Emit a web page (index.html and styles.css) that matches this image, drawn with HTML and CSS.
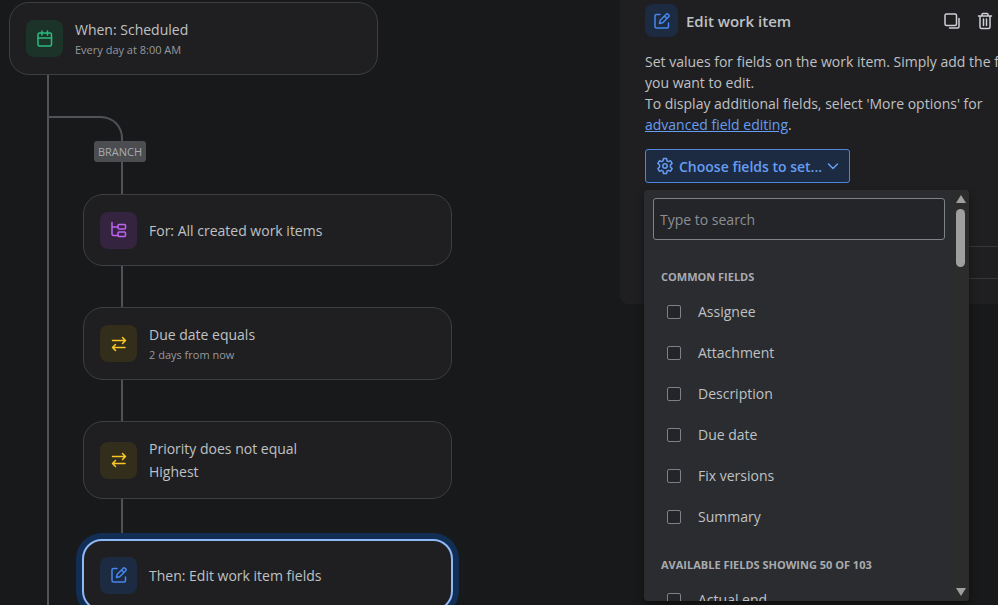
FILE: index.html
```
<!DOCTYPE html>
<html lang="en">
<head>
  <meta charset="utf-8">
  <title>Automation rule</title>
  <link rel="stylesheet" href="styles.css">
</head>
<body>
  <div class="layout">

    <!-- Rule flow -->
    <main class="flow">
      <div class="card">
        <span class="icon green">
          <svg width="18" height="18" viewBox="0 0 18 18"><rect x="2" y="3" width="13.500" height="13" rx="1.5"/><path d="M2 8h13.500M6 1v4M11.500 1v4"/></svg>
        </span>
        <div class="card-text">
          <div class="card-title">When: Scheduled</div>
          <div class="card-sub">Every day at 8:00 AM</div>
        </div>
      </div>

      <div class="branch">
        <div class="branch-line"></div>
        <div class="branch-label">BRANCH</div>
        <div class="connector short"></div>

        <div class="card">
          <span class="icon purple">
            <svg width="18" height="18" viewBox="0 0 18 18"><path d="M2 1.500v11.500q0 1.500 1.500 1.500H8M2 6h6"/><rect x="8" y="3.500" width="7.500" height="4.500" rx="1"/><rect x="8" y="11" width="7.500" height="4.500" rx="1"/></svg>
          </span>
          <div class="card-text">
            <div class="card-title">For: All created work items</div>
          </div>
        </div>
        <div class="connector"></div>

        <div class="card">
          <span class="icon yellow">
            <svg width="18" height="18" viewBox="0 0 18 18"><path d="M2.500 5.500h13M12.500 2.500l3 3-3 3M15 12.500H2.500M5.500 9.500l-3 3 3 3"/></svg>
          </span>
          <div class="card-text">
            <div class="card-title">Due date equals</div>
            <div class="card-sub">2 days from now</div>
          </div>
        </div>
        <div class="connector"></div>

        <div class="card">
          <span class="icon yellow">
            <svg width="18" height="18" viewBox="0 0 18 18"><path d="M2.500 5.500h13M12.500 2.500l3 3-3 3M15 12.500H2.500M5.500 9.500l-3 3 3 3"/></svg>
          </span>
          <div class="card-text">
            <div class="card-title">Priority does not equal<br>Highest</div>
          </div>
        </div>
        <div class="connector"></div>

        <div class="card active">
          <span class="icon blue">
            <svg width="18" height="18" viewBox="0 0 18 18"><path d="M7 2.500H3.500Q2 2.500 2 4v10.500Q2 16 3.500 16H14q1.500 0 1.500-1.500V11M6.500 11.500l.7-3.300 6-6q.9-.9 1.800 0l.7.700q.9.900 0 1.800l-6 6zM11.500 4l2.500 2.500"/></svg>
          </span>
          <div class="card-text">
            <div class="card-title">Then: Edit work item fields</div>
          </div>
        </div>
      </div>
    </main>

    <!-- Edit panel -->
    <aside class="panel">
      <div class="panel-header">
        <span class="icon blue small">
          <svg width="18" height="18" viewBox="0 0 18 18"><path d="M7 2.500H3.500Q2 2.500 2 4v10.500Q2 16 3.500 16H14q1.500 0 1.500-1.500V11M6.500 11.500l.7-3.300 6-6q.9-.9 1.800 0l.7.700q.9.900 0 1.800l-6 6zM11.500 4l2.500 2.500"/></svg>
        </span>
        <h2>Edit work item</h2>
        <button class="icon-button" aria-label="Duplicate">
          <svg width="18" height="18" viewBox="0 0 18 18"><rect x="2" y="2" width="11.500" height="11.500" rx="1.500"/><path d="M16 6.500v8q0 1.500-1.500 1.500h-8"/></svg>
        </button>
        <button class="icon-button" aria-label="Delete">
          <svg width="18" height="18" viewBox="0 0 18 18"><path d="M2.500 4h13M6 4V2.500Q6 1.500 7 1.500h4q1 0 1 1V4M4 4v11q0 1.500 1.500 1.500h7q1.500 0 1.500-1.500V4M7.500 7v6.500M10.500 7v6.500"/></svg>
        </button>
      </div>

      <p class="description">Set values for fields on the work item. Simply add the fields<br>you want to edit.<br>To display additional fields, select 'More options' for<br><a href="#">advanced field editing</a>.</p>

      <div class="picker">
        <button class="choose">
          <svg width="18" height="18" viewBox="0 0 18 18"><path d="M7.500 1.500h3l.5 2.300 1.300.8 2.300-.8 1.500 2.600-1.700 1.600v2l1.700 1.600-1.500 2.600-2.300-.8-1.300.8-.5 2.300h-3L7 14.200l-1.300-.8-2.300.8-1.500-2.600L3.600 10V8L1.900 6.400l1.500-2.600 2.300.8L7 3.800z"/><circle cx="9" cy="9" r="2.200"/></svg>
          Choose fields to set...
          <svg width="12" height="12" viewBox="0 0 12 12"><path d="M1.500 4L6 8.500 10.500 4"/></svg>
        </button>

        <div class="menu">
          <div class="menu-list">
            <input class="search" type="text" placeholder="Type to search" aria-label="Search fields">
            <h3>COMMON FIELDS</h3>
            <label><input type="checkbox">Assignee</label>
            <label><input type="checkbox">Attachment</label>
            <label><input type="checkbox">Description</label>
            <label><input type="checkbox">Due date</label>
            <label><input type="checkbox">Fix versions</label>
            <label><input type="checkbox">Summary</label>
            <h3>AVAILABLE FIELDS SHOWING 50 OF 103</h3>
            <label><input type="checkbox">Actual end</label>
          </div>
          <div class="scrollbar">
            <span class="arrow-up"></span>
            <span class="thumb"></span>
            <span class="arrow-down"></span>
          </div>
        </div>
      </div>

      <div class="more-row"></div>
    </aside>

  </div>
</body>
</html>
```
FILE: styles.css
```
* {
  box-sizing: border-box;
}

body {
  margin: 0;
  background-color: #18191a;
  color: #bfc1c4;
  font-family: "Open Sans", "Noto Sans", sans-serif;
  font-size: 14px;
  overflow: hidden;
}

svg {
  fill: none;
  stroke: currentColor;
  stroke-width: 1.5;
  stroke-linecap: round;
  stroke-linejoin: round;
  flex: none;
}

button {
  font: inherit;
  cursor: pointer;
}

.layout {
  display: flex;
  align-items: flex-start;
  height: 100vh;
  overflow: hidden;
}

/* Flow */
.flow {
  flex: 1;
  padding: 2px 0 0 9px;
}

.card {
  display: flex;
  align-items: center;
  gap: 12px;
  width: 369px;
  min-height: 72px;
  padding: 15px 16px;
  background-color: #1f1f21;
  border: 1px solid #3d3f43;
  border-radius: 20px;
}

.card.active {
  width: 371px;
  margin: -1px;
  border: 2px solid #8fb8f6;
  box-shadow: 0 0 0 6px #122e55;
}

.card-title {
  line-height: 23px;
}

.card-sub {
  color: #96999e;
  font-size: 11px;
  line-height: 18px;
}

.icon {
  display: flex;
  align-items: center;
  justify-content: center;
  flex: none;
  width: 37px;
  height: 37px;
  border-radius: 8px;
}

.icon.small {
  width: 33px;
  height: 33px;
}

.green {
  background-color: #1c3329;
  color: #2abb7f;
}

.purple {
  background-color: #35243f;
  color: #bf63f3;
}

.yellow {
  background-color: #332e1b;
  color: #fbc828;
}

.blue {
  background-color: #1c2b42;
  color: #4688ec;
}

.branch {
  margin-left: 38px;
  padding: 41px 0 40px 34px;
  border-left: 2px solid #505258;
}

.branch-line {
  width: 74px;
  height: 25px;
  margin-left: -34px;
  border-top: 2px solid #505258;
  border-right: 2px solid #505258;
  border-top-right-radius: 22px;
}

.branch-label {
  width: 52px;
  margin-left: 11px;
  background-color: #4b4d51;
  color: #a9abaf;
  border-radius: 3px;
  font-size: 11px;
  line-height: 21px;
  text-align: center;
}

.connector {
  width: 2px;
  height: 41px;
  margin-left: 38px;
  background-color: #505258;
}

.connector.short {
  height: 32px;
}

/* Panel */
.panel {
  flex: 0 0 378px;
  min-width: 0;
  height: 304px;
  padding: 4px 0 0 25px;
  background-color: #1f1f21;
  border-bottom-left-radius: 8px;
}

.panel-header {
  display: flex;
  align-items: center;
  gap: 8px;
  padding-right: 4px;
}

.panel-header h2 {
  flex: 1;
  margin: 0;
  font-size: 15px;
  font-weight: 600;
}

.icon-button {
  display: flex;
  padding: 0;
  margin-left: 7px;
  background: none;
  border: none;
  color: #ced0d6;
}

.description {
  margin: 14px 0;
  line-height: 21px;
  white-space: nowrap;
}

.description a {
  color: #669df1;
}

.picker {
  position: relative;
}

.choose {
  display: flex;
  align-items: center;
  gap: 5px;
  height: 34px;
  padding: 0 10px;
  background-color: #1c2b42;
  border: 1px solid #4f86dc;
  border-radius: 3px;
  color: #669df1;
  font-weight: 600;
}

.menu {
  position: absolute;
  top: 41px;
  left: -1px;
  display: flex;
  width: 325px;
  height: 411px;
  background-color: #2b2c2f;
  border-radius: 4px;
  box-shadow: 0 4px 8px rgba(0, 0, 0, 0.4);
  overflow: hidden;
}

.menu-list {
  flex: 1;
  padding: 8px 7px 0 9px;
}

.search {
  display: block;
  width: 100%;
  height: 42px;
  margin-bottom: 27px;
  padding: 0 6px;
  background-color: #242528;
  border: 1px solid #7e8188;
  border-radius: 3px;
  color: #bfc1c4;
  font: inherit;
}

.search::placeholder {
  color: #8c8f94;
}

.menu h3 {
  margin: 18px 0 4px;
  padding-left: 8px;
  color: #a9abaf;
  font-size: 11px;
  font-weight: 700;
  line-height: 20px;
}

.menu label {
  display: flex;
  align-items: center;
  gap: 17px;
  height: 41px;
  padding-left: 14px;
}

.menu label input {
  appearance: none;
  width: 14px;
  height: 14px;
  margin: 0;
  background-color: #242528;
  border: 1px solid #7e8188;
  border-radius: 2px;
}

.scrollbar {
  display: flex;
  flex-direction: column;
  align-items: center;
  width: 17px;
  padding: 5px 0;
  background-color: #2c2c2c;
}

.arrow-up {
  border: 5px solid transparent;
  border-top: none;
  border-bottom: 8px solid #9f9f9f;
}

.thumb {
  width: 9px;
  height: 58px;
  margin-top: 6px;
  background-color: #9f9f9f;
  border-radius: 5px;
}

.arrow-down {
  margin-top: auto;
  border: 5px solid transparent;
  border-bottom: none;
  border-top: 8px solid #9f9f9f;
}

.more-row {
  height: 33px;
  margin: 63px 0 0 16px;
  border-top: 1px solid #36373a;
  border-bottom: 1px solid #36373a;
}
```
